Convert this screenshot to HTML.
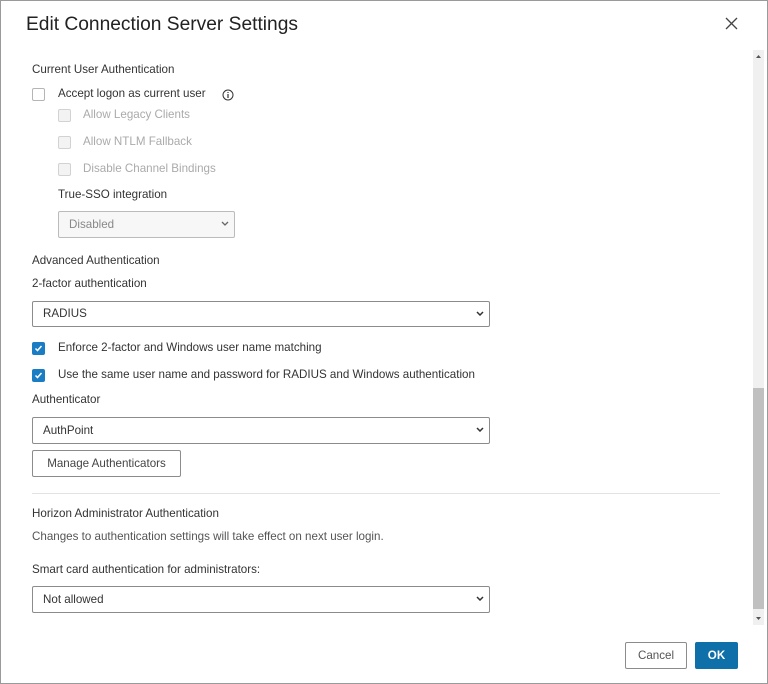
<!DOCTYPE html>
<html><head><style>
body{margin:0;width:768px;height:684px;overflow:hidden;background:#fff;font-family:"Liberation Sans",sans-serif;color:#333;position:relative}
.frame{position:absolute;left:0;top:0;width:766px;height:682px;border:1px solid #9a9a9a}
.t{position:absolute;font-size:11.6px;white-space:nowrap;line-height:14px}
.g{color:#aaa}
.cb{position:absolute;width:11px;height:11px;border:1px solid #b5b5b5;border-radius:2px;background:#fff}
.cb.d{background:#f3f3f3;border-color:#d2d2d2}
.cb.c{background:#1a7dc4;border-color:#1a7dc4}
.sel{position:absolute;border:1px solid #8c8c8c;border-radius:2px;background:#fff;height:25px;box-sizing:border-box;font-size:11.6px;line-height:23px;padding-left:10px;color:#333}
.sel svg{position:absolute;right:5px;top:9px}
.btn{position:absolute;box-sizing:border-box;border:1px solid #8c8c8c;border-radius:2px;background:#fff;font-size:11.6px;text-align:center;color:#444}
</style></head><body>
<div class="frame"></div>
<div class="t" style="left:26px;top:13px;font-size:19.2px;line-height:24px;color:#222">Edit Connection Server Settings</div>
<svg style="position:absolute;left:725px;top:17px" width="13" height="13"><path d="M1 1L12 12M12 1L1 12" stroke="#444" stroke-width="1.3"/></svg>

<div class="t" style="left:32px;top:63px">Current User Authentication</div>
<div class="cb" style="left:32px;top:88px"></div>
<div class="t" style="left:58px;top:87px">Accept logon as current user</div>
<svg style="position:absolute;left:222px;top:89px" width="12" height="12"><circle cx="6" cy="6" r="5" fill="none" stroke="#333" stroke-width="1"/><path d="M6 5V9M6 3v1" stroke="#333" stroke-width="1.2"/></svg>
<div class="cb d" style="left:58px;top:109px"></div>
<div class="t g" style="left:83px;top:108px">Allow Legacy Clients</div>
<div class="cb d" style="left:58px;top:136px"></div>
<div class="t g" style="left:83px;top:135px">Allow NTLM Fallback</div>
<div class="cb d" style="left:58px;top:163px"></div>
<div class="t g" style="left:83px;top:162px">Disable Channel Bindings</div>
<div class="t" style="left:58px;top:188px">True-SSO integration</div>
<div class="sel" style="left:58px;top:211px;width:177px;height:27px;line-height:25px;background:#f7f7f7;border-color:#bbb;color:#888">Disabled<svg width="8" height="5"><path d="M1 1L4 4L7 1" fill="none" stroke="#666" stroke-width="1.3"/></svg></div>

<div class="t" style="left:32px;top:254px">Advanced Authentication</div>
<div class="t" style="left:32px;top:277px">2-factor authentication</div>
<div class="sel" style="left:32px;top:301px;width:458px;height:26px;line-height:24px">RADIUS<svg width="8" height="5"><path d="M1 1L4 4L7 1" fill="none" stroke="#333" stroke-width="1.5"/></svg></div>
<div class="cb c" style="left:32px;top:342px"><svg width="11" height="11" style="position:absolute;left:0;top:0"><path d="M2.5 5.5L4.5 7.5L8.5 3" fill="none" stroke="#fff" stroke-width="1.5"/></svg></div>
<div class="t" style="left:58px;top:341px">Enforce 2-factor and Windows user name matching</div>
<div class="cb c" style="left:32px;top:369px"><svg width="11" height="11" style="position:absolute;left:0;top:0"><path d="M2.5 5.5L4.5 7.5L8.5 3" fill="none" stroke="#fff" stroke-width="1.5"/></svg></div>
<div class="t" style="left:58px;top:368px">Use the same user name and password for RADIUS and Windows authentication</div>
<div class="t" style="left:32px;top:393px">Authenticator</div>
<div class="sel" style="left:32px;top:417px;width:458px;height:27px;line-height:25px">AuthPoint<svg width="8" height="5"><path d="M1 1L4 4L7 1" fill="none" stroke="#333" stroke-width="1.5"/></svg></div>
<div class="btn" style="left:32px;top:450px;width:149px;height:27px;line-height:25px">Manage Authenticators</div>

<div style="position:absolute;left:32px;top:493px;width:688px;height:1px;background:#e2e2e2"></div>
<div class="t" style="left:32px;top:507px">Horizon Administrator Authentication</div>
<div class="t" style="left:32px;top:530px;color:#555">Changes to authentication settings will take effect on next user login.</div>
<div class="t" style="left:32px;top:563px">Smart card authentication for administrators:</div>
<div class="sel" style="left:32px;top:586px;width:458px;height:27px;line-height:25px">Not allowed<svg width="8" height="5"><path d="M1 1L4 4L7 1" fill="none" stroke="#333" stroke-width="1.5"/></svg></div>

<div style="position:absolute;left:753px;top:50px;width:11px;height:575px;background:#f0f0f0"></div>
<div style="position:absolute;left:753px;top:388px;width:11px;height:221px;background:#c0c0c0"></div>
<svg style="position:absolute;left:755px;top:54px" width="7" height="5"><path d="M1 4L3.5 1L6 4Z" fill="#555"/></svg>
<svg style="position:absolute;left:755px;top:616px" width="7" height="5"><path d="M1 1L3.5 4L6 1Z" fill="#555"/></svg>

<div class="btn" style="left:625px;top:642px;width:62px;height:27px;line-height:25px;color:#555">Cancel</div>
<div class="btn" style="left:695px;top:642px;width:43px;height:27px;line-height:25px;background:#0f6fa8;border-color:#0f6fa8;color:#fff;font-weight:bold">OK</div>
</body></html>
